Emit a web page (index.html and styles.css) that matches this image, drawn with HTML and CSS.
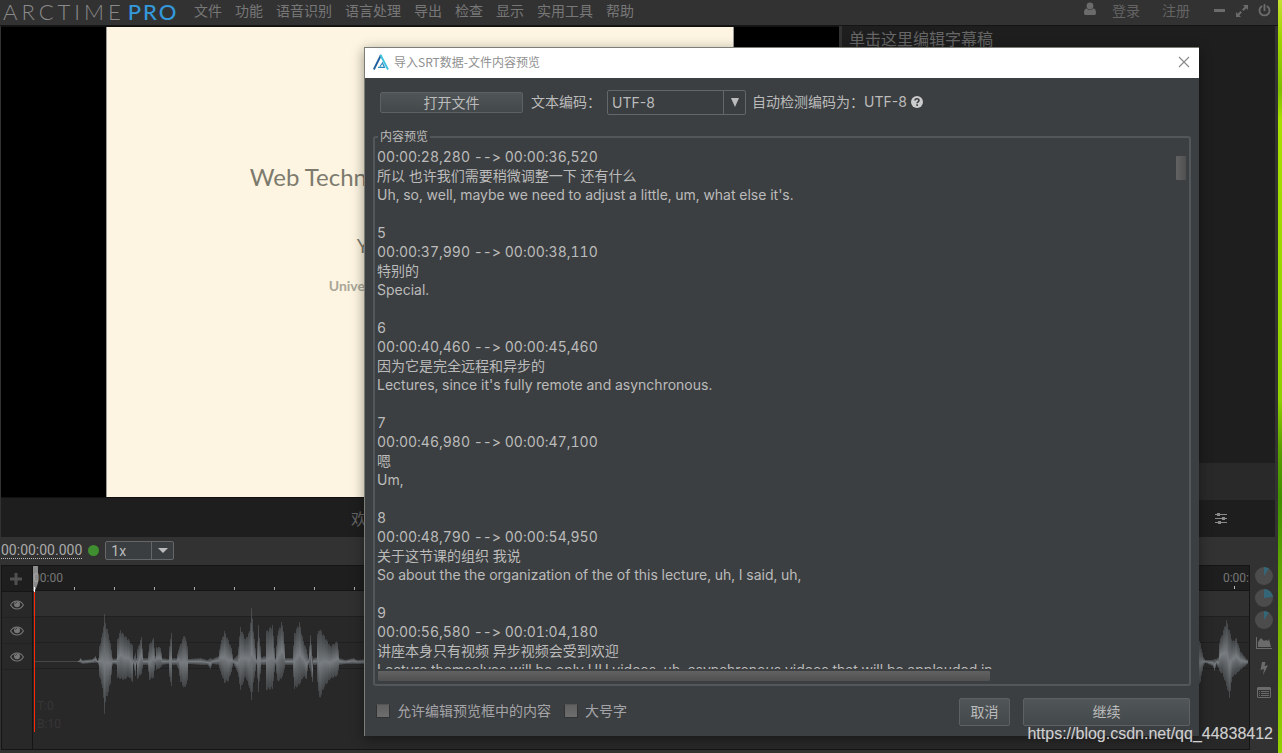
FILE: index.html
```html
<!DOCTYPE html>
<html lang="zh-CN">
<head>
<meta charset="utf-8">
<title>Arctime Pro</title>
<link rel="stylesheet" href="styles.css">
</head>
<body>
<div class="app">
  <header class="topbar">
    <h1 class="logo"><span class="logo-name">ARCTIME</span><span class="logo-pro">PRO</span></h1>
    <nav class="menu">
      <a href="#">文件</a><a href="#">功能</a><a href="#">语音识别</a><a href="#">语言处理</a><a href="#">导出</a><a href="#">检查</a><a href="#">显示</a><a href="#">实用工具</a><a href="#">帮助</a>
    </nav>
    <div class="account">
      <svg class="icon-user" width="12" height="14" viewBox="0 0 12 14"><circle cx="6" cy="4" r="3.4"/><path d="M1 7.2C.2 8 0 10 0 11c0 1.400.8 2 1.800 2h8.400c1 0 1.800-.6 1.800-2 0-1-.2-3-1-3.800-.6-.6-1.400-.7-2-.7C8.200 7.500 7.200 8 6 8S3.800 7.500 3 6.500c-.6 0-1.400.1-2 .7z"/></svg>
      <a href="#">登录</a>
      <a href="#">注册</a>
    </div>
    <div class="window-tools">
      <button class="tool" aria-label="最小化"><svg width="12" height="12" viewBox="0 0 12 12"><path d="M0 4h11v3H0z"/></svg></button>
      <button class="tool" aria-label="最大化"><svg width="12" height="12" viewBox="0 0 12 12"><path d="M7 0h5v5l-1.700-1.700L7.500 6 6 4.500l2.700-2.800zM5 12H0V7l1.700 1.700L4.500 6 6 7.500l-2.700 2.800z"/></svg></button>
      <button class="tool" aria-label="退出"><svg width="13" height="13" viewBox="0 0 13 13"><path d="M3.500 2.400a5 5 0 1 0 6 0M6.500.9v5.300" fill="none" stroke="#6b6b6b" stroke-width="1.900" stroke-linecap="round"/></svg></button>
    </div>
  </header>

  <main class="stage">
    <section class="player">
      <div class="video">
        <div class="slide">
          <p class="slide-title">Web Techn</p>
          <p class="slide-author">Y</p>
          <p class="slide-school">Univer</p>
        </div>
      </div>
      <p class="caption">欢</p>
    </section>
    <section class="script">
      <p class="script-hint">单击这里编辑字幕稿</p>
      <div class="script-bar"></div>
      <div class="script-tools">
        <svg width="12" height="12" viewBox="0 0 12 12"><path d="M0 1h12v1H0zM0 5h12v1H0zM0 9h12v1H0zM2 0h3v3H2zM7 4h3v3H7zM3 8h3v3H3z"/></svg>
      </div>
    </section>
  </main>

  <div class="transport">
    <span class="timecode">00:00:00.000</span>
    <span class="status"></span>
    <span class="combo combo-speed">
      <select aria-label="播放速度"><option>1x</option></select>
      <span class="combo-arrow"><svg width="10" height="5" viewBox="0 0 10 5"><path d="M0 0h10L5 5z"/></svg></span>
    </span>
  </div>

  <div class="bottom">
    <section class="timeline">
      <div class="tracks-head">
        <button class="add" aria-label="添加轨道"><svg width="12" height="12" viewBox="0 0 12 12"><path d="M4.500 0h3v4.500H12v3H7.500V12h-3V7.500H0v-3h4.500z"/></svg></button>
        <button class="eye" aria-label="轨道 1"><svg width="14" height="10" viewBox="0 0 14 10"><path d="M.6 5C3.500-.3 10.500-.3 13.400 5 10.500 10.300 3.500 10.300.6 5z" fill="none" stroke="#777" stroke-width="1.100"/><circle cx="7" cy="4.300" r="3"/><path d="M5.400 4q.2-1.600 1.600-1.700" fill="none" stroke="#333" stroke-width=".7"/></svg></button>
        <button class="eye" aria-label="轨道 2"><svg width="14" height="10" viewBox="0 0 14 10"><path d="M.6 5C3.500-.3 10.500-.3 13.400 5 10.500 10.300 3.500 10.300.6 5z" fill="none" stroke="#777" stroke-width="1.100"/><circle cx="7" cy="4.300" r="3"/><path d="M5.400 4q.2-1.600 1.600-1.700" fill="none" stroke="#333" stroke-width=".7"/></svg></button>
        <button class="eye" aria-label="轨道 3"><svg width="14" height="10" viewBox="0 0 14 10"><path d="M.6 5C3.500-.3 10.500-.3 13.400 5 10.500 10.300 3.500 10.300.6 5z" fill="none" stroke="#777" stroke-width="1.100"/><circle cx="7" cy="4.300" r="3"/><path d="M5.400 4q.2-1.600 1.600-1.700" fill="none" stroke="#333" stroke-width=".7"/></svg></button>
      </div>
      <div class="tracks">
        <div class="ruler"><span>00:00</span><span>0:00:</span></div>
        <div class="lanes">
          <div class="lane lane-first"></div>
          <div class="lane"></div>
          <div class="lane"></div>
          <p class="levels">T:0<br>B:10</p>
          <div class="wave">
            <svg id="wave-start" width="340" height="140" viewBox="33 591 340 140"></svg>
            <svg id="wave-end" width="60" height="140" viewBox="1189 591 60 140"></svg>
          </div>
        </div>
        <div class="overview"><span class="overview-thumb"></span><span class="overview-end"></span></div>
        <div class="playhead"><svg width="6" height="26" viewBox="0 0 6 26"><path d="M0 0h5v17l-3 8H0z" fill="#bbb" fill-opacity=".7"/><path d="M1 21h1v5H1z" fill="#fff"/></svg></div>
      </div>
    </section>
    <aside class="side">
      <svg width="18" height="18" viewBox="0 0 18 18"><circle cx="9" cy="9" r="9" fill="#4c4c4c"/><path d="M9 9V0a9 9 0 0 1 5 1.500z" fill="#346677"/></svg>
      <svg width="18" height="18" viewBox="0 0 18 18"><circle cx="9" cy="9" r="9" fill="#4c4c4c"/><path d="M9 9V0a9 9 0 0 1 9 8z" fill="#346677"/></svg>
      <svg width="18" height="18" viewBox="0 0 18 18"><circle cx="9" cy="9" r="9" fill="#4c4c4c"/><path d="M9 9V0a9 9 0 0 1 5 1.500z" fill="#346677"/></svg>
      <svg class="side-chart" width="16" height="12" viewBox="0 0 16 12"><path d="M0 0h1v11h15v1H0z"/><path d="M2 10V5l3-4 3 3 2-1 2 1 1-2 2 8z"/></svg>
      <svg class="side-bolt" width="8" height="13" viewBox="0 0 8 13"><path d="M2 0h3.500L4.500 4 8 3.200 3 13l1-6-3.500 1z"/></svg>
      <svg width="14" height="11" viewBox="0 0 14 11"><path fill-rule="evenodd" d="M1 0h12l1 1v9l-1 1H1l-1-1V1zM1 3v7h12V3z"/><path d="M2 4h1v1H2zM4 4h8v1H4zM2 6h1v1H2zM4 6h8v1H4zM2 8h1v1H2zM4 8h8v1H4z"/></svg>
    </aside>
  </div>
</div>
<div class="desktop"></div>

<div class="dialog" role="dialog" aria-labelledby="dialog-title">
  <div class="titlebar">
    <svg width="16" height="16" viewBox="0 0 16 16" fill="none" stroke-width="1.900"><path d="M.8 15.500 8 1" fill="none" stroke="#1d5f9e"/><path d="M7.500 1 15 15.500" fill="none" stroke="#3fc3e0"/><path d="M5 13.400h6.500L9.500 9 7 12.500" fill="none" stroke="#2f8cbf" stroke-width="1.200"/></svg>
    <h2 id="dialog-title">导入SRT数据-文件内容预览</h2>
    <button class="close" aria-label="关闭"><svg width="12" height="12" viewBox="0 0 12 12"><path d="M1 1l10 10M11 1 1 11" stroke="#888" stroke-width="1.100"/></svg></button>
  </div>
  <div class="dialog-body">
    <div class="options">
      <button class="btn btn-open">打开文件</button>
      <label for="encoding">文本编码：</label>
      <span class="combo combo-encoding">
        <select id="encoding"><option>UTF-8</option></select>
        <span class="combo-arrow"><svg width="8" height="9" viewBox="0 0 8 9"><path d="M0 0h8L4 9z"/></svg></span>
      </span>
      <span class="detected">自动检测编码为：UTF-8</span>
      <svg width="12" height="12" viewBox="0 0 12 12"><circle cx="6" cy="6" r="6"/><path d="M4 4.500C4 2.200 8 2.200 8 4.500 8 6 6.100 5.800 6.100 7.300M6.100 8.300v1.600" fill="none" stroke="#3c3f41" stroke-width="1.600"/></svg>
    </div>
    <fieldset class="preview">
      <legend>内容预览</legend>
      <textarea wrap="off" readonly aria-label="内容预览">00:00:28,280 --&gt; 00:00:36,520
所以 也许我们需要稍微调整一下 还有什么
Uh, so, well, maybe we need to adjust a little, um, what else it's.

5
00:00:37,990 --&gt; 00:00:38,110
特别的
Special.

6
00:00:40,460 --&gt; 00:00:45,460
因为它是完全远程和异步的
Lectures, since it's fully remote and asynchronous.

7
00:00:46,980 --&gt; 00:00:47,100
嗯
Um,

8
00:00:48,790 --&gt; 00:00:54,950
关于这节课的组织 我说
So about the the organization of the of this lecture, uh, I said, uh,

9
00:00:56,580 --&gt; 00:01:04,180
讲座本身只有视频 异步视频会受到欢迎
Lecture themselves will be only UU videos, uh, asynchronous videos that will be applauded in</textarea>
      <div class="vbar"><span></span></div>
      <div class="hbar"><span></span></div>
    </fieldset>
    <div class="footer">
      <label class="check"><input type="checkbox">允许编辑预览框中的内容</label>
      <label class="check"><input type="checkbox">大号字</label>
      <button class="btn btn-cancel">取消</button>
      <button class="btn btn-next">继续</button>
    </div>
  </div>
</div>
<p class="watermark">https://blog.csdn.net/qq_44838412</p>
<script src="wave.js"></script>
</body>
</html>
```
FILE: styles.css
```css
* { box-sizing: border-box; }
html, body { height: 100%; }
body {
  margin: 0;
  display: flex;
  position: relative;
  overflow: hidden;
  background: #323232;
  color: #bbb;
  font: 14px/20px "Noto Sans CJK SC", sans-serif;
}
h1, h2, p { margin: 0; font-weight: 400; }
a { color: inherit; text-decoration: none; }
svg { display: block; flex: none; fill: #6b6b6b; }
button { padding: 0; border: 0; background: none; color: inherit; font: inherit; }

.app { flex: 1; min-width: 0; display: flex; flex-direction: column; }
.desktop {
  width: 4px;
  background: linear-gradient(#c4e030, #9fd400 40px, #7fbf00 90px, #a8e000 120px, #8ed000 400px, #5a9e00 450px, #3f8f00 500px, #6fae00 600px, #95d000);
}

/* top bar */
.topbar { display: flex; align-items: flex-start; height: 26px; color: #777; border-bottom: 1px solid #151515; }
.logo { display: flex; gap: 3px; width: 194px; padding-left: 3px; font-family: Lato, sans-serif; font-size: 22px; line-height: 24px; }
.logo-name { font-weight: 300; letter-spacing: 4px; color: #8a8a8a; }
.logo-pro { font-weight: 500; letter-spacing: 2px; color: #3498db; }
.menu { flex: 1; display: flex; gap: 13px; }
.account { display: flex; gap: 22px; color: #646464; }
.icon-user { margin: 2px -6px 0 0; }
.window-tools { display: flex; gap: 10px; padding: 4px 7px 0 24px; }
.tool { height: 13px; }

/* video and script */
.stage { flex: 1; min-height: 0; display: flex; gap: 3px; padding: 0 3px 0 1px; }
.player { flex: 838; display: flex; flex-direction: column; background: #1e1e1e; }
.video { flex: 1; min-height: 0; display: flex; justify-content: center; background: #000; border-top: 1px solid #111; border-bottom: 1px solid #111; }
.slide { width: 75%; background: #fdf5e1; color: #7d7b6e; font-family: Lato, sans-serif; padding: 133px 0 0 143px; border: solid #999; border-width: 0 1px; }
.slide-title { font-size: 24px; line-height: 34px; }
.slide-author { padding: 40px 0 0 107px; font-size: 19px; line-height: 24px; }
.slide-school { padding: 18px 0 0 79px; font-size: 14px; line-height: 20px; font-weight: 700; color: #aaa798; }
.caption { height: 39px; padding: 10px 0 0 350px; font-size: 16px; color: #646464; }
.script { flex: 433; display: flex; flex-direction: column; background: #1e1e1e; }
.script-hint { flex: 1; padding: 3px 7px; font-size: 16px; line-height: 18px; color: #666; }
.script-bar { height: 37px; background: #292929; }
.script-tools { display: flex; justify-content: flex-end; height: 37px; padding: 13px 48px 0 0; }
.script-tools svg { fill: #8a8a8a; }

/* transport */
.transport { height: 28px; display: flex; align-items: center; padding: 0 0 1px 1px; font-family: Roboto, sans-serif; }
.timecode { border-bottom: 1px dotted #bbb; line-height: 16px; color: #aaa; }
.status { width: 11px; height: 11px; margin: 0 6px; border-radius: 50%; background: #3f8e2f; }
.combo { display: flex; border: 1px solid #646668; border-radius: 2px; background: #3a3e41; }
.combo select { flex: 1; min-width: 0; padding: 0 5px; border: 0; background: none; color: #bbb; font: inherit; appearance: none; }
.combo-arrow { display: flex; align-items: center; justify-content: center; width: 22px; border-left: 1px solid #646668; }
.combo-arrow svg { fill: #bbb; }
.combo-speed { width: 69px; height: 19px; line-height: 16px; }

/* timeline */
.bottom { display: flex; height: 188px; padding: 0 0 3px 1px; }
.timeline { flex: 1; min-width: 0; display: flex; border: 1px solid #151515; background: #282828; }
.tracks-head { width: 31px; border-right: 1px solid #151515; }
.tracks-head button { display: flex; width: 100%; height: 26px; align-items: center; justify-content: center; border-bottom: 1px solid #222; }
.tracks-head .add { padding-right: 2px; background: #1e1e1e; border-color: #151515; }
.add svg { fill: #505050; }
.eye svg { fill: #777; }
.tracks { flex: 1; min-width: 0; position: relative; display: flex; flex-direction: column; }
.ruler {
  display: flex;
  justify-content: space-between;
  height: 26px;
  border-bottom: 1px solid #151515;
  background-color: #1e1e1e;
  background-image: linear-gradient(#bbb, #bbb), repeating-linear-gradient(90deg, #aaa 0 1px, transparent 1px 40px);
  background-size: 1px 3px, 340px 3px;
  background-position: right 14px bottom 1px, 1px 21px;
  background-repeat: no-repeat;
  font: 12px/24px Roboto, sans-serif;
  color: #777;
}
.lanes { flex: 1; position: relative; }
.lane { height: 26px; border-bottom: 1px solid #202020; }
.lane-first { background: #303030; }
.levels { padding: 28px 4px; font: 12px/18px Roboto, sans-serif; color: #363636; }
.wave { position: absolute; inset: 0; display: flex; justify-content: space-between; }
.overview { display: flex; justify-content: space-between; height: 17px; background: #1e1e1e; }
.overview-thumb { width: 19px; background: #4a4a4a; border: solid #888; border-width: 0 1px; }
.overview-end { width: 4px; background: #702828; }
.playhead { position: absolute; inset: 0 auto 17px 0; display: flex; flex-direction: column; }
.playhead::after { content: ""; flex: 1; width: 1px; margin-left: 1px; background: #ff2600; }
.side { width: 28px; display: flex; flex-direction: column; align-items: center; gap: 4px; padding: 2px 1px 0 0; }
.side-chart { margin-top: 4px; }
.side-bolt { margin: 9px 0 8px; }

/* import dialog */
.dialog {
  position: absolute;
  inset: 47px 83px 17px 364px;
  display: flex;
  flex-direction: column;
  border: solid #7d7d78;
  border-width: 1px 0 0 1px;
  background: #3c3f41;
  box-shadow: 0 3px 12px rgba(0, 0, 0, .4);
}
.titlebar { height: 30px; display: flex; align-items: center; gap: 5px; padding: 0 9px 2px 8px; background: #fff; }
.titlebar h2 { flex: 1; font-size: 12px; color: #909090; }
.dialog-body { flex: 1; min-height: 0; display: flex; flex-direction: column; padding: 11px 8px 10px; font-family: Inter, "Noto Sans CJK SC", sans-serif; }
.options { display: flex; align-items: center; height: 26px; padding-left: 7px; gap: 6px; }
.options > svg { margin-left: -2px; fill: #ccc; }
.btn { border: 1px solid #5d6163; border-radius: 2px; background: linear-gradient(#505658, #43484b); }
.btn-open { width: 143px; height: 21px; margin-right: 2px; line-height: 19px; }
.combo-encoding { width: 139px; height: 25px; }
.combo-encoding select { padding: 1px 4px 0; }
.preview {
  flex: 1;
  min-width: 0;
  min-height: 0;
  display: grid;
  grid-template: minmax(0, 1fr) 12px / minmax(0, 1fr) 15px;
  margin: 12px 0 0;
  padding: 0 2px 3px;
  border: 2px solid #53575a;
  border-radius: 3px;
}
.preview legend { margin-left: 1px; padding: 0 2px; font-size: 12px; line-height: 20px; }
.preview textarea {
  margin: 0;
  padding: 0;
  border: 0;
  resize: none;
  overflow: hidden;
  white-space: pre;
  background: none;
  color: #bbb;
  font: 14px/19px Inter, "Noto Sans CJK SC", sans-serif;
  font-variant-numeric: tabular-nums;
  font-feature-settings: "calt" 0;
}
.vbar { padding: 9px 1px 0 4px; }
.vbar span { display: block; height: 24px; border-radius: 1px; background: linear-gradient(90deg, #626262, #505050); }
.hbar span { display: block; width: 77%; height: 10px; margin: 2px 0 0 1px; border-radius: 1px; background: linear-gradient(#626262, #505050); }
.footer { display: flex; align-items: center; height: 28px; margin-top: 12px; padding: 0 1px 0 3px; }
.check { display: flex; align-items: center; gap: 7px; margin-right: 13px; padding-bottom: 2px; color: #a4a4a8; }
.check input { appearance: none; width: 14px; height: 14px; margin: 0; background: linear-gradient(#616161, #6d6d6d); border: 1px solid #303234; border-top-color: #555; }
.btn-cancel { width: 51px; height: 28px; margin: 0 13px 0 auto; }
.btn-next { width: 167px; height: 28px; }
.btn-cancel, .btn-next { padding-bottom: 1px; }

.watermark { position: absolute; right: 9px; bottom: 9px; font: 16px/20px "Liberation Sans", sans-serif; color: #d0d0d0; text-shadow: 0 0 1px #555; }
```
FILE: wave.js
```js
// Envelope samples: [x, height above the axis, depth below the axis]
const start = [[34,0,0],[78,0,0],[80,3,1],[82,1,2],[92,2,1],[95,5,1],[97,1,1],[98,3,3],[99,15,15],[102,28,26],[104,47,52],[105,38,40],[107,32,34],[110,18,22],[112,4,4],[113,2,2],[116,3,3],[117,22,16],[120,31,17],[124,26,18],[128,22,15],[132,16,20],[133,3,3],[135,8,14],[136,3,3],[137,12,17],[141,24,12],[143,3,3],[147,3,3],[149,17,18],[153,23,16],[155,5,3],[156,14,8],[160,14,6],[162,3,3],[168,2,2],[169,16,16],[171,28,24],[172,3,3],[176,3,3],[178,12,8],[180,17,20],[184,27,27],[187,16,20],[188,2,2],[200,3,3],[207,1,3],[210,3,7],[212,2,2],[218,5,3],[220,18,10],[224,30,21],[228,21,19],[231,13,10],[233,2,2],[237,6,10],[240,34,28],[245,22,15],[249,30,26],[251,53,38],[253,32,22],[256,3,3],[258,36,30],[261,4,3],[265,5,3],[266,30,28],[272,36,27],[275,3,3],[277,28,20],[281,39,17],[283,32,12],[285,3,3],[292,3,3],[294,28,27],[299,39,23],[303,20,15],[306,12,17],[308,3,3],[310,28,10],[312,5,20],[313,3,3],[316,4,3],[317,27,20],[319,33,38],[324,25,25],[330,15,17],[337,20,14],[339,3,3],[345,1,2],[353,3,2],[357,1,2],[365,2,2],[372,2,2]];
const end = [[1189,3,3],[1194,30,30],[1200,18,20],[1203,4,4],[1205,1,1],[1212,1,4],[1214,2,9],[1216,2,3],[1218,4,6],[1219,20,10],[1222,28,12],[1226,41,24],[1229,31,36],[1232,20,15],[1236,23,12],[1240,10,8],[1246,2,3],[1248,1,1]];
const NS = "http://www.w3.org/2000/svg";

function draw(id, points) {
  const svg = document.getElementById(id);
  svg.innerHTML = `<defs><linearGradient id="${id}-fill" x2="0" y2="1">
    <stop offset="0" stop-color="#54585b" stop-opacity=".6"/><stop offset=".5" stop-color="#787d81"/>
    <stop offset="1" stop-color="#54585b" stop-opacity=".6"/></linearGradient></defs>`;
  for (let i = 0; i < points.length - 1; i++) {
    const [x0, up0, down0] = points[i];
    const [x1, up1, down1] = points[i + 1];
    for (let x = x0; x < x1; x++) {
      const t = (x - x0) / (x1 - x0);
      const jitter = x % 3 === 1 ? 0.92 : 1;
      const up = (up0 + (up1 - up0) * t) * jitter;
      const down = (down0 + (down1 - down0) * t) * jitter;
      const bar = document.createElementNS(NS, "rect");
      bar.setAttribute("x", x);
      bar.setAttribute("y", 661 - up);
      bar.setAttribute("width", 1);
      bar.setAttribute("height", up + down + 1);
      bar.setAttribute("fill", x < 78 ? "#484848" : `url(#${id}-fill)`);
      svg.append(bar);
    }
  }
}

draw("wave-start", start);
draw("wave-end", end);
```
